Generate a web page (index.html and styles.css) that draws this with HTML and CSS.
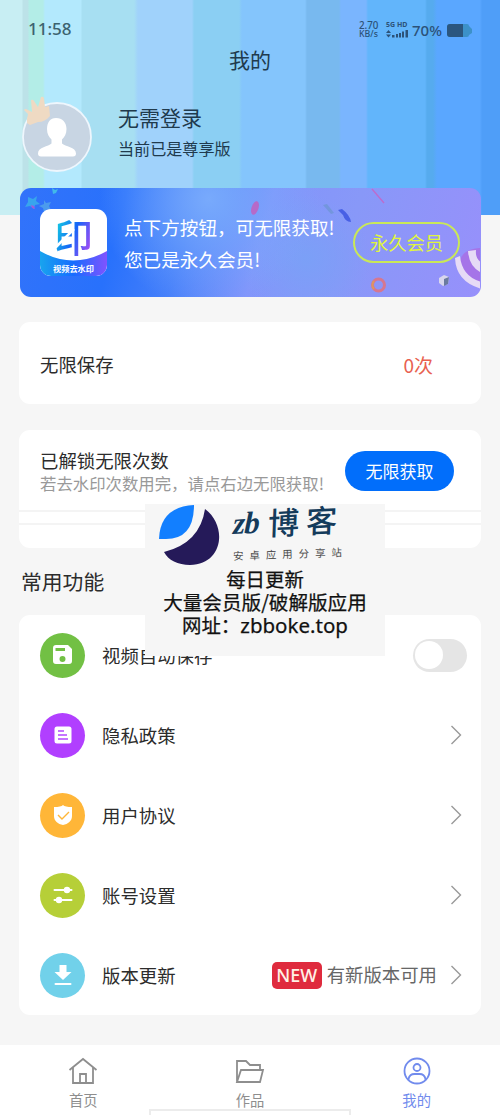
FILE: index.html
```html
<!DOCTYPE html>
<html lang="zh-CN">
<head>
<meta charset="utf-8">
<meta name="viewport" content="width=device-width, initial-scale=1">
<title>我的</title>
<link rel="stylesheet" href="styles.css">
</head>
<body>
<div class="phone">
  <header class="header">
    <div class="status">
      <span class="clock">11:58</span>
      <div class="status-right">
        <div class="speed"><span>2.70</span><span>KB/s</span></div>
        <div class="network">
          <span>5G HD</span>
          <svg width="22" height="8" viewBox="0 0 22 8" fill="#2c5278"><path d="M2.500 0 5 3H0zM2.500 7.500 5 4.500H0zM6 5h2.500v2.500H6zM10 4h2v3.500h-2zM13 3h2v4.500h-2zM16 1.500h2v6h-2zM19.500 0H22v7.500h-2.500z"/></svg>
        </div>
        <span class="percent">70%</span>
        <svg class="battery" width="26" height="14" viewBox="0 0 26 14"><path d="M3 0h17q2 0 2 2l3 3v4l-3 2q0 2-2 2H3q-3 0-3-3V3q0-3 3-3z" fill="#3c91c9"/><path d="M3 0h13v13H3q-3 0-3-3V3q0-3 3-3z" fill="#2b567f"/></svg>
      </div>
    </div>
    <h1 class="title">我的</h1>
    <div class="profile">
      <div class="avatar">
        <svg width="70" height="70" viewBox="0 0 70 70"><circle cx="35" cy="35" r="34" fill="#c8d5e3" stroke="#eef6fd" stroke-width="1.800"/><path d="M34 16c6.500 0 10.500 4.500 10.500 11 0 5-2 8-4.500 10.500v4c3 3 14 3.500 14 10 0 2-1 3-3 3H19c-2 0-3-1-3-3 0-6.500 10.500-7 13.500-10v-4C27 35 25 32 25 27c0-6.500 3-11 9-11z" fill="#fff"/></svg>
        <svg class="crown" width="30" height="30" viewBox="0 0 30 30"><path d="M1 14q1-2 4 0l4 2-1-12q2-1 3 1l4 6 3-10q3-1 3 2l1 8 4-1 1 10q-5 6-12 6l-8 3-3-2v-4l1-5z" fill="#efdac3"/></svg>
      </div>
      <div class="profile-text">
        <div class="name">无需登录</div>
        <div class="level">当前已是尊享版</div>
      </div>
    </div>
  </header>

  <main class="main">
    <section class="banner">
      <svg class="confetti" width="460" height="109" viewBox="0 0 460 109">
        <path d="m8 9 5 2 4-3-1 5 4 3-5 1-1 4-4-3-5 1 3-5z" fill="#38a5ed"/><path d="m24 12 2 3 5-1-2 4 2 4-4-1-3 3-1-4-4-2 5-2z" fill="#4b9bed"/><path d="m32 0 3 2 3-1-2 4-3 1z" fill="#42b9e9"/><path d="m11 17 3 1 1 3-3-1z" fill="#a15adc"/>
        <ellipse cx="235" cy="20" rx="3.500" ry="7" fill="#b66ac9" transform="rotate(18 235 20)"/>
        <path d="m303 17 4-1 7 9-3 1z" fill="#7396dd"/>
        <path d="m318 22 4-1q8 6 9 13-6 0-8-7z" fill="#4860e5"/>
        <path d="m352 1 12 14" stroke="#bd6bcc" stroke-width="1.300"/>
        <circle cx="358.500" cy="97" r="6" fill="none" stroke="#d57791" stroke-width="3"/><path d="M354 101a6 6 0 0 1 0-8" fill="none" stroke="#dc985f" stroke-width="2"/>
        <path d="m419 90 5-3 5 2-1 7-5 2-4-3z" fill="#d8d6ed"/><path d="m424 91 5-2-1 7-4 2z" fill="#6b7aa0"/>
        <path d="M462 60c-15 0-23 7-23 18 0 10 9 20 23 22z" fill="#a574e8"/>
        <path d="M435 70q1 24 27 31v-7q-20-5-22-26zM448 63l8-1q-1 9 6 13v10q-13-6-14-22z" fill="#e6dbf6"/>
      </svg>
      <div class="app-logo">
        <svg class="logo-base" width="67" height="67" viewBox="0 0 67 67"><defs><linearGradient id="lg"><stop stop-color="#18a4ee"/><stop offset=".5" stop-color="#166cff"/><stop offset="1" stop-color="#8053ff"/></linearGradient></defs><path d="M0 42q33 19 67 0v14q0 11-11 11H11Q0 67 0 56z" fill="url(#lg)"/></svg>
        <span class="logo-mark">印</span>
        <svg class="logo-cut" width="40" height="36" viewBox="0 0 40 36"><path d="m2 30 19-19" stroke="#fff" stroke-width="2.500"/></svg>
        <span class="logo-name">视频去水印</span>
      </div>
      <div class="banner-text"><div>点下方按钮，可无限获取!</div><div>您已是永久会员!</div></div>
      <button class="member">永久会员</button>
    </section>

    <section class="card saves"><span>无限保存</span><span class="count">0次</span></section>

    <section class="card unlock">
      <div class="unlock-main">
        <div><div class="unlock-title">已解锁无限次数</div><div class="unlock-note">若去水印次数用完，请点右边无限获取!</div></div>
        <button class="get">无限获取</button>
      </div>
      <div class="empty-row"></div>
    </section>

    <h2 class="section-title">常用功能</h2>
    <section class="card menu">
      <div class="row">
        <span class="icon green"><svg width="20" height="20" viewBox="0 0 20 20"><path fill="#fff" fill-rule="evenodd" d="M3 0h12l4 4v12q0 3-3 3H3q-3 0-3-3V3q0-3 3-3zM2.500 3v3H12V3zM9.500 11a3 3 0 1 0 0 6 3 3 0 0 0 0-6z"/></svg></span>
        <span class="label">视频自动保存</span><span class="switch"><i></i></span>
      </div>
      <div class="row">
        <span class="icon purple"><svg width="18" height="18" viewBox="0 0 18 18"><rect x=".5" y=".5" width="17" height="17" rx="2.500" fill="#fff"/><path d="M4 5h6M4 9h9M4 13h10" stroke="#b347ff" stroke-width="1.400"/></svg></span>
        <span class="label">隐私政策</span><svg class="arrow" width="12" height="20" viewBox="0 0 12 20"><path d="m1.500 1 9 9-9 9"/></svg>
      </div>
      <div class="row">
        <span class="icon orange"><svg width="20" height="20" viewBox="0 0 20 20"><path d="M10 0q2 2 9 2v9c0 5-4 8-9 9-5-1-9-4-9-9V2q7 0 9-2z" fill="#fff"/><path d="m5 10 4 4 7-7" fill="none" stroke="#ffb638" stroke-width="1.400"/></svg></span>
        <span class="label">用户协议</span><svg class="arrow" width="12" height="20" viewBox="0 0 12 20"><path d="m1.500 1 9 9-9 9"/></svg>
      </div>
      <div class="row">
        <span class="icon lime"><svg width="20" height="20" viewBox="0 0 20 20" fill="#fff" stroke="#fff" stroke-width="2" stroke-linecap="round"><path d="M1.500 5h17M1.500 15h17"/><circle cx="14" cy="5" r="2.200"/><circle cx="6" cy="15" r="2.200"/></svg></span>
        <span class="label">账号设置</span><svg class="arrow" width="12" height="20" viewBox="0 0 12 20"><path d="m1.500 1 9 9-9 9"/></svg>
      </div>
      <div class="row">
        <span class="icon cyan"><svg width="18" height="22" viewBox="0 0 18 22"><path d="M5.500 1h7v7h5L9 16 .5 8h5z" fill="#fff"/><path d="M1.500 20h15" stroke="#fff" stroke-width="2" stroke-linecap="round"/></svg></span>
        <span class="label">版本更新</span><span class="new">NEW</span><span class="available">有新版本可用</span><svg class="arrow" width="12" height="20" viewBox="0 0 12 20"><path d="m1.500 1 9 9-9 9"/></svg>
      </div>
    </section>
  </main>

  <nav class="tabs">
    <a class="tab"><svg width="30" height="28" viewBox="0 0 30 28"><path d="M1.500 13 15 2l13.500 11M5 10.500V26h20V10.500M12 26v-9h6v9"/></svg><span>首页</span></a>
    <a class="tab"><svg width="30" height="28" viewBox="0 0 30 28"><path d="M2 25V4h9l4 4h10v5M2 25l4-12h22l-3 12z"/></svg><span>作品</span></a>
    <a class="tab active"><svg width="30" height="28" viewBox="0 0 30 28"><circle cx="15" cy="14" r="12.500"/><circle cx="15" cy="10.500" r="3.500"/><path d="M6.500 23v-1q1-5 6-5h5q5 0 6 5v1"/></svg><span>我的</span></a>
  </nav>

  <aside class="promo">
    <div class="promo-head">
      <svg width="62" height="62" viewBox="0 0 62 62"><path d="M0 35Q1 3 35 1q0 34-28 34z" fill="#127fff"/><path d="M46 5c23 17 18 56-15 56-12 0-22-5-26-13Q41 39 46 5z" fill="#251a59"/></svg>
      <div class="promo-brand"><div class="brand"><span class="latin">zb</span><span>博</span><span>客</span></div><div class="slogan">安卓应用分享站</div></div>
    </div>
    <div class="promo-copy"><div>每日更新</div><div class="wide">大量会员版/破解版应用</div><div>网址：<span class="site">zbboke.top</span></div></div>
  </aside>
  <div class="home-bar"></div>
</div>
</body>
</html>
```
FILE: styles.css
```css
* { box-sizing: border-box; }
body { margin: 0; font-family: "Noto Sans CJK SC", sans-serif; color: #2c2c2c; background: #f6f6f6; }
button { font: inherit; padding: 0; white-space: nowrap; }
svg { display: block; flex: none; }
.phone { position: relative; width: 500px; height: 1115px; overflow: hidden; display: flex; flex-direction: column; background: #f6f6f6; }

.header { flex: none; height: 215px; color: #203a4d; background: linear-gradient(90deg, #c8eef3 0 22px, #bce2e8 23px 28px, #b3ede7 29px 43px, #b3e9fd 45px 81px, #a7dff2 82px 134px, #a0d2fb 138px 192px, #8bcff3 194px 239px, #84c5fc 242px 305px, #78b9ef 307px 339px, #7ab5fe 341px 366px, #62b5fb 368px 425px, #56abee 427px 433px, #5aa7ff 437px 480px, #4f9ef8 482px); }
.status { height: 45px; padding: 17px 27px 0 28px; display: flex; justify-content: space-between; }
.clock { font: 500 17px/24px "Noto Sans", sans-serif; color: #3c626f; }
.status-right { display: flex; align-items: flex-start; color: #2c5278; }
.speed { width: 27px; padding-top: 4px; display: flex; flex-direction: column; font: 500 9.800px/9px "Noto Sans", sans-serif; }
.speed span:last-child { font-size: 8.800px; }
.network { width: 26px; padding-top: 4px; font: 700 7px/8px "Noto Sans", sans-serif; white-space: nowrap; }
.network svg { margin-top: 1px; }
.percent { width: 35px; font: 500 15px/27px "Noto Sans", sans-serif; }
.battery { margin-top: 7px; }
.title { margin: 0; height: 30px; font-weight: 400; font-size: 21px; line-height: 28px; text-align: center; }
.profile { display: flex; padding: 27px 22px 0; }
.avatar { position: relative; width: 70px; height: 70px; }
.crown { position: absolute; left: 1px; top: -6px; }
.profile-text { padding: 0 0 0 26px; }
.name { font-size: 21px; line-height: 30px; }
.level { font-size: 16.100px; line-height: 32px; }

.main { flex: 1; padding: 0 19px; }
.banner { position: relative; display: flex; align-items: center; width: 461px; height: 109px; margin: -27px 0 25px 1px; padding: 0 21px 0 20px; border-radius: 11px; overflow: hidden; color: #fff; background: radial-gradient(circle at 41% 10%, #78aafc 0, #78aafc00 38%), radial-gradient(circle at 62% 65%, #7ba0f7, #7ba0f700 22%), linear-gradient(105deg, #3273fa 0, #2871fc 22%, #457ffa 36%, #8295fb 52%, #8898f8 70%, #9790fb); }
.confetti { position: absolute; inset: 0; }
.app-logo { position: relative; width: 67px; height: 67px; border-radius: 11px; background: #fff; overflow: hidden; }
.logo-base { position: absolute; inset: 0; }
.logo-mark { position: absolute; left: 14px; top: -3px; font-size: 39px; line-height: 58px; font-weight: 500; color: transparent; background: linear-gradient(110deg, #14bde5 20%, #1665f7 50%, #a04cf4 85%); background-clip: text; -webkit-background-clip: text; }
.logo-cut { position: absolute; left: 13px; top: 9px; }
.logo-name { position: absolute; left: 0; right: 0; top: 53px; text-align: center; font-size: 8.200px; line-height: 12px; font-weight: 700; white-space: nowrap; }
.banner-text { position: relative; margin-left: 17px; width: 229px; font-size: 18.600px; line-height: 32px; white-space: nowrap; }
.member { position: relative; width: 107px; height: 41px; flex: none; border: 2px solid #c9e857; border-radius: 21px; background: none; color: #e0f53e; font-size: 18.300px; line-height: 35px; }

.card { background: #fff; border-radius: 11px; width: 462px; }
.saves { height: 82px; padding: 2px 48px 0 21px; display: flex; justify-content: space-between; align-items: center; font-size: 18.400px; }
.count { color: #e86150; font-size: 19px; }
.unlock { height: 118px; margin-top: 26px; }
.unlock-main { height: 82px; padding: 0 27px 0 21px; display: flex; align-items: center; justify-content: space-between; border-bottom: 2px solid #f4f4f4; }
.unlock-title { font-size: 18.400px; line-height: 25px; padding-top: 2px; }
.unlock-note { color: #999; font-size: 16.400px; line-height: 21px; white-space: nowrap; }
.get { width: 109px; height: 40px; margin-top: 2px; border: 0; border-radius: 20px; color: #fff; background: #016efb; font-size: 17px; line-height: 38px; }
.empty-row { height: 13px; border-bottom: 2px solid #f4f4f4; }
.section-title { margin: 18px 0; padding-left: 2px; font-size: 20.800px; line-height: 31px; font-weight: 400; }
.menu { height: 400px; }
.row { height: 80px; display: flex; align-items: center; padding: 0 19px 0 21px; font-size: 18.400px; }
.icon { width: 45px; height: 45px; border-radius: 50%; display: flex; align-items: center; justify-content: center; }
.green { background: #72c044; }
.purple { background: #b13fff; }
.orange { background: #ffb638; }
.lime { background: #b6cf38; }
.cyan { background: #71d1ea; }
.label { margin-left: 17px; flex: 1; }
.switch { width: 54px; height: 33px; margin-right: -5px; padding: 2px; border-radius: 17px; background: #e5e5e5; }
.switch i { display: block; width: 28px; height: 28px; border-radius: 50%; background: #fff; }
.arrow { fill: none; stroke: #999; stroke-width: 1.400; }
.new { width: 50px; height: 27px; margin-right: 5px; border-radius: 5px; background: #df2b3e; color: #fff1e6; font: 500 18px/27px "Noto Sans", sans-serif; text-align: center; }
.available { color: #666; margin-right: 13px; padding-bottom: 2px; }

.tabs { height: 70px; flex: none; background: #fff; display: grid; grid-template-columns: repeat(3, 1fr); }
.tab { padding-top: 12px; display: flex; flex-direction: column; align-items: center; color: #8e8e8e; font-size: 14.300px; line-height: 20px; }
.tab span { margin-top: 5px; }
.tab svg { fill: none; stroke: currentColor; stroke-width: 1.800; }
.active { color: #718bed; }

.promo { position: absolute; left: 145px; top: 504px; width: 240px; height: 152px; background: #f6f6f6; color: #111; }
.promo-head { height: 62px; padding-left: 14px; display: flex; }
.promo-brand { padding-left: 12px; }
.brand { height: 40px; display: flex; gap: 7px; color: #143b5b; font-size: 31px; line-height: 34px; font-weight: 500; transform: rotate(-3deg) skewX(-5deg); }
.latin { width: 28px; font-family: "Liberation Serif", serif; font-weight: 700; font-style: italic; letter-spacing: -1px; }
.slogan { font-size: 10.500px; line-height: 19px; letter-spacing: 5.900px; color: #4a4a4a; white-space: nowrap; transform: rotate(-2deg); }
.promo-copy { text-align: center; font-size: 19.400px; line-height: 23px; -webkit-text-stroke: .25px #111; padding-top: 1px; }
.wide { font-size: 19.600px; }
.site { font: 400 20.500px/23px "Noto Sans", sans-serif; }
.home-bar { position: absolute; left: 149px; top: 1109px; width: 202px; height: 9px; background: #fff; border: 2px solid #ececec; }
```
